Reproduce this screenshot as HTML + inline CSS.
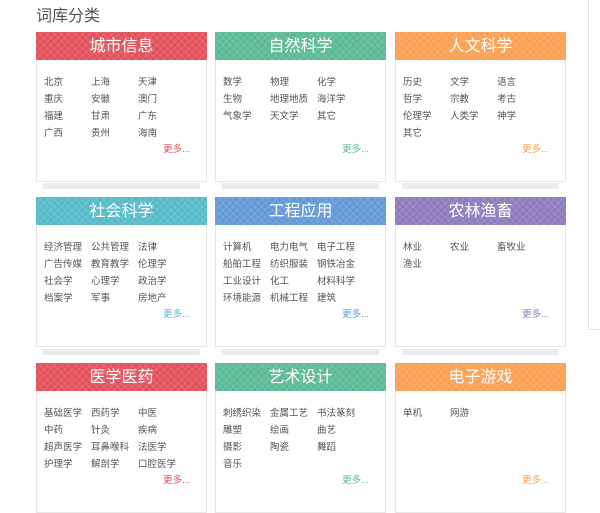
<!DOCTYPE html>
<html><head><meta charset="utf-8"><style>
body{margin:0;background:#fff;font-family:"Liberation Sans","Noto Sans CJK SC",sans-serif;width:600px;height:500px;overflow:hidden;position:relative}
h1{position:absolute;left:36px;top:2px;margin:0;font-size:16px;font-weight:normal;color:#555}
.side{position:absolute;left:588px;top:-2px;width:20px;height:330px;border:1px solid #e5e5e5}
.c{position:absolute;width:169px;height:148px;border:1px solid #e8e8e8;background:#fff}
.c .h{height:28px;line-height:30px;text-align:center;color:#fff;font-size:16px;margin:-1px -1px 0 -1px;
background-image:repeating-linear-gradient(45deg,rgba(255,255,255,.07) 0 2px,transparent 2px 5px),repeating-linear-gradient(-45deg,rgba(255,255,255,.07) 0 2px,transparent 2px 5px)}
.c .g{display:grid;grid-template-columns:47px 47px 47px;padding:14px 0 0 7px;font-size:9.5px;color:#555;line-height:17px;white-space:nowrap}
.c .m{position:absolute;right:16px;top:108px;font-size:9.5px}
.b{position:absolute;width:157px;height:6px;background:#ececec}
</style></head><body>
<h1>词库分类</h1>
<div class="side"></div>

<div class="c" style="left:36px;top:32px"><div class="h" style="background-color:#e2505a">城市信息</div><div class="g"><span>北京</span><span>上海</span><span>天津</span><span>重庆</span><span>安徽</span><span>澳门</span><span>福建</span><span>甘肃</span><span>广东</span><span>广西</span><span>贵州</span><span>海南</span></div><span class="m" style="color:#e2505a">更多...</span></div>
<div class="b" style="left:43px;top:183px"></div>
<div class="c" style="left:215px;top:32px"><div class="h" style="background-color:#5bb994">自然科学</div><div class="g"><span>数学</span><span>物理</span><span>化学</span><span>生物</span><span>地理地质</span><span>海洋学</span><span>气象学</span><span>天文学</span><span>其它</span></div><span class="m" style="color:#5bb994">更多...</span></div>
<div class="b" style="left:222px;top:183px"></div>
<div class="c" style="left:395px;top:32px"><div class="h" style="background-color:#fb9f52">人文科学</div><div class="g"><span>历史</span><span>文学</span><span>语言</span><span>哲学</span><span>宗教</span><span>考古</span><span>伦理学</span><span>人类学</span><span>神学</span><span>其它</span></div><span class="m" style="color:#fb9f52">更多...</span></div>
<div class="b" style="left:402px;top:183px"></div>

<div class="c" style="left:36px;top:197px"><div class="h" style="background-color:#55bac8">社会科学</div><div class="g"><span>经济管理</span><span>公共管理</span><span>法律</span><span>广告传媒</span><span>教育教学</span><span>伦理学</span><span>社会学</span><span>心理学</span><span>政治学</span><span>档案学</span><span>军事</span><span>房地产</span></div><span class="m" style="color:#55bac8">更多...</span></div>
<div class="b" style="left:43px;top:349px"></div>
<div class="c" style="left:215px;top:197px"><div class="h" style="background-color:#6298d8">工程应用</div><div class="g"><span>计算机</span><span>电力电气</span><span>电子工程</span><span>船舶工程</span><span>纺织服装</span><span>钢铁冶金</span><span>工业设计</span><span>化工</span><span>材料科学</span><span>环境能源</span><span>机械工程</span><span>建筑</span></div><span class="m" style="color:#6298d8">更多...</span></div>
<div class="b" style="left:222px;top:349px"></div>
<div class="c" style="left:395px;top:197px"><div class="h" style="background-color:#8e7bbd">农林渔畜</div><div class="g"><span>林业</span><span>农业</span><span>畜牧业</span><span>渔业</span></div><span class="m" style="color:#8e7bbd">更多...</span></div>
<div class="b" style="left:402px;top:349px"></div>

<div class="c" style="left:36px;top:363px"><div class="h" style="background-color:#e2505a">医学医药</div><div class="g"><span>基础医学</span><span>西药学</span><span>中医</span><span>中药</span><span>针灸</span><span>疾病</span><span>超声医学</span><span>耳鼻喉科</span><span>法医学</span><span>护理学</span><span>解剖学</span><span>口腔医学</span></div><span class="m" style="color:#e2505a">更多...</span></div>
<div class="c" style="left:215px;top:363px"><div class="h" style="background-color:#5bb994">艺术设计</div><div class="g"><span>刺绣织染</span><span>金属工艺</span><span>书法篆刻</span><span>雕塑</span><span>绘画</span><span>曲艺</span><span>摄影</span><span>陶瓷</span><span>舞蹈</span><span>音乐</span></div><span class="m" style="color:#5bb994">更多...</span></div>
<div class="c" style="left:395px;top:363px"><div class="h" style="background-color:#fb9f52">电子游戏</div><div class="g"><span>单机</span><span>网游</span></div><span class="m" style="color:#fb9f52">更多...</span></div>
</body></html>
